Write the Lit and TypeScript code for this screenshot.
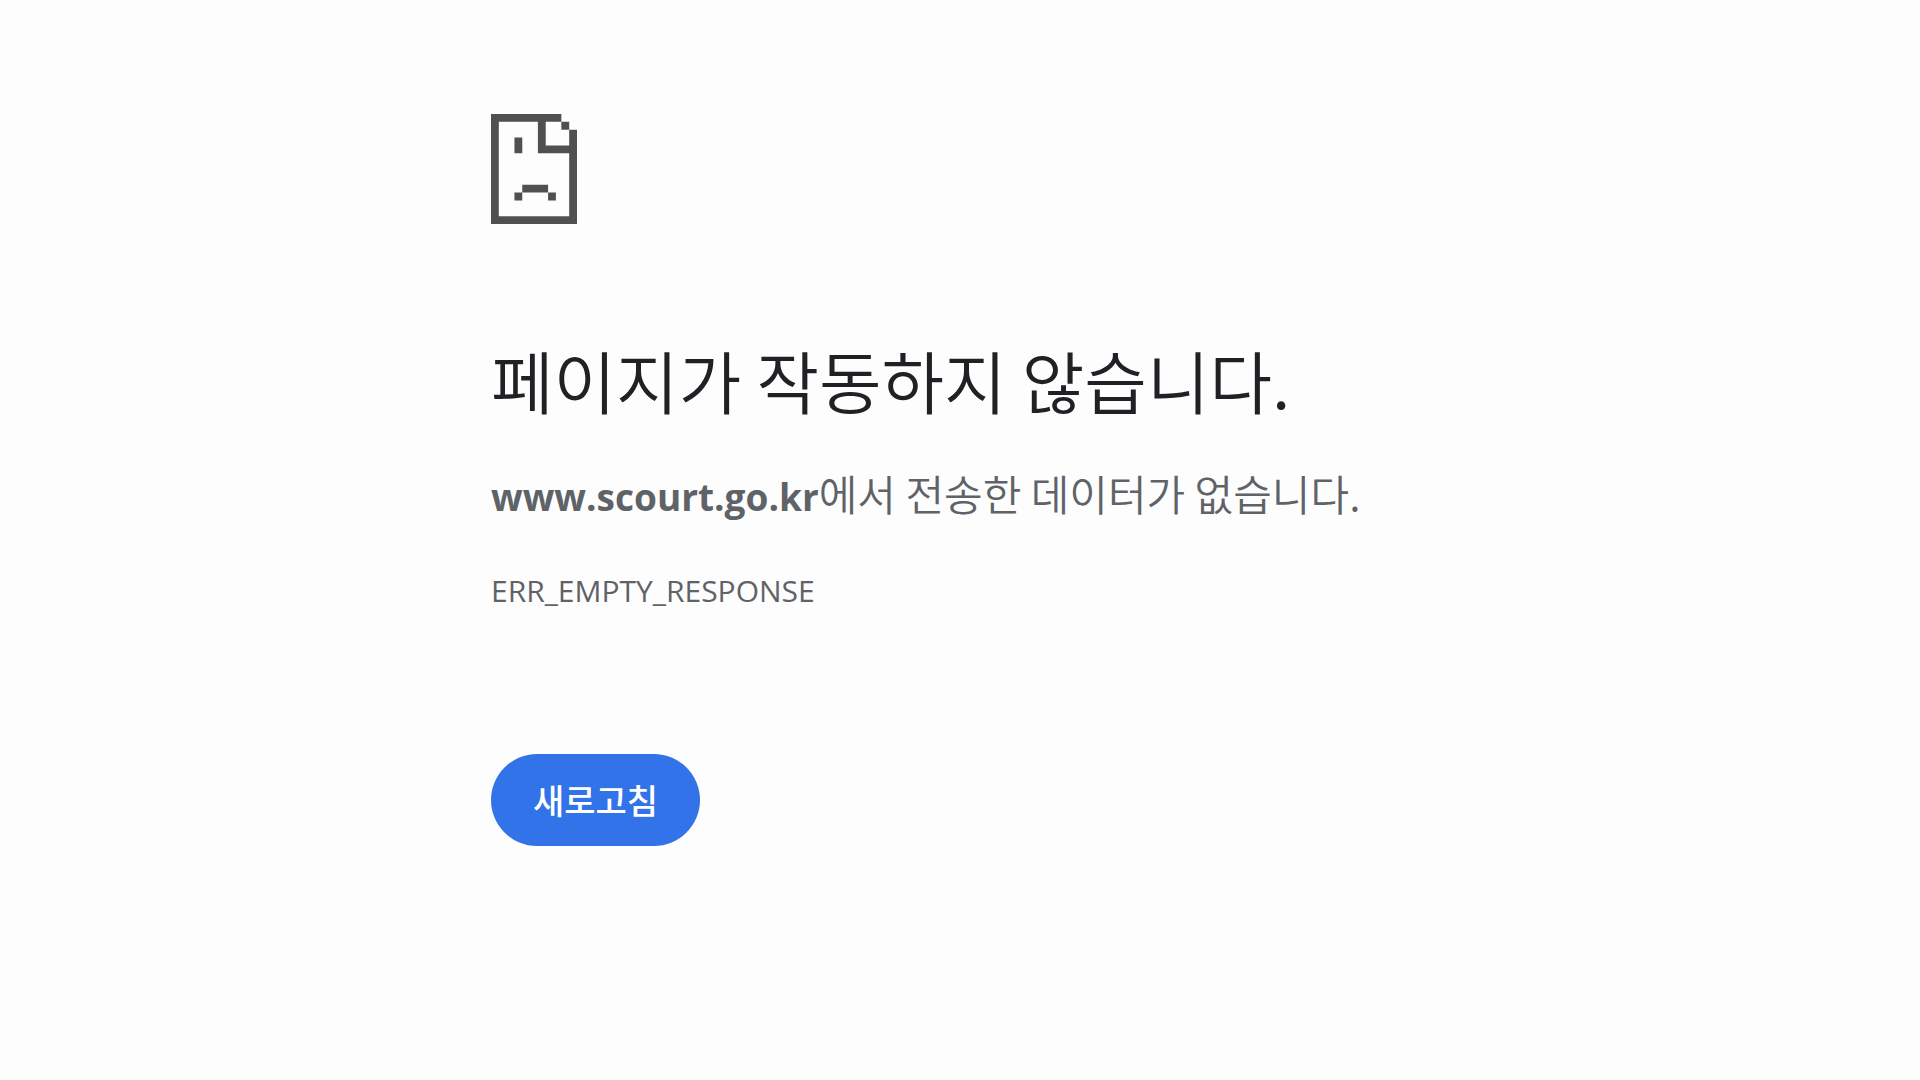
import { LitElement, html, css } from "lit";
import { customElement } from "lit/decorators.js";

@customElement("sad-page-icon")
export class SadPageIcon extends LitElement {
  static styles = css`
    :host {
      display: block;
    }
    .icon {
      display: block;
      width: 86px;
      height: 110px;
      fill: #505050;
    }
  `;

  render() {
    return html`
      <svg class="icon" viewBox="0 0 110 140" preserveAspectRatio="none" aria-hidden="true">
        <path
          d="M0 0H90V10H70V40H100V20H110V140H0ZM10 10V130H100V50H60V10ZM90 10H100V20H90ZM30 30H40V50H30ZM40 90H73V100H40ZM30 100H40V110H30ZM73 100H83V110H73Z"
          fill-rule="evenodd"
        />
      </svg>
    `;
  }
}

@customElement("app-root")
export class AppRoot extends LitElement {
  static styles = css`
    :host {
      display: block;
      min-height: 100vh;
      box-sizing: border-box;
      padding: 114px 32px 32px;
      background: #fdfdfd;
      color: #5f6368;
      font-family: "Open Sans", "Noto Sans CJK KR", sans-serif;
    }
    .content {
      max-width: 938px;
      margin: 0 auto;
    }
    .title {
      margin: 116px 0 0;
      color: #202124;
      font-family: "Noto Sans CJK KR", sans-serif;
      font-size: 68px;
      font-weight: 350;
      line-height: 80px;
    }
    .summary {
      margin: 45px 0 0;
      font-family: "Noto Sans CJK KR", sans-serif;
      font-size: 42px;
      font-weight: 350;
      line-height: 56px;
    }
    .host {
      font-family: "Open Sans", sans-serif;
      font-size: 37px;
      font-weight: 700;
    }
    .code {
      margin: 46px 0 0;
      font-size: 30px;
      line-height: 40px;
    }
    .reload {
      display: block;
      margin: 143px 0 0;
      padding: 22px 42px;
      border: 0;
      border-radius: 46px;
      background: #3273e9;
      color: #fff;
      font-family: "Noto Sans CJK KR", sans-serif;
      font-size: 34px;
      font-weight: 500;
      line-height: 48px;
      cursor: pointer;
    }
  `;

  render() {
    return html`
      <main class="content">
        <sad-page-icon></sad-page-icon>
        <h1 class="title">페이지가 작동하지 않습니다.</h1>
        <p class="summary"><strong class="host">www.scourt.go.kr</strong>에서 전송한 데이터가 없습니다.</p>
        <p class="code">ERR_EMPTY_RESPONSE</p>
        <button class="reload" type="button" @click=${() => location.reload()}>새로고침</button>
      </main>
    `;
  }
}
